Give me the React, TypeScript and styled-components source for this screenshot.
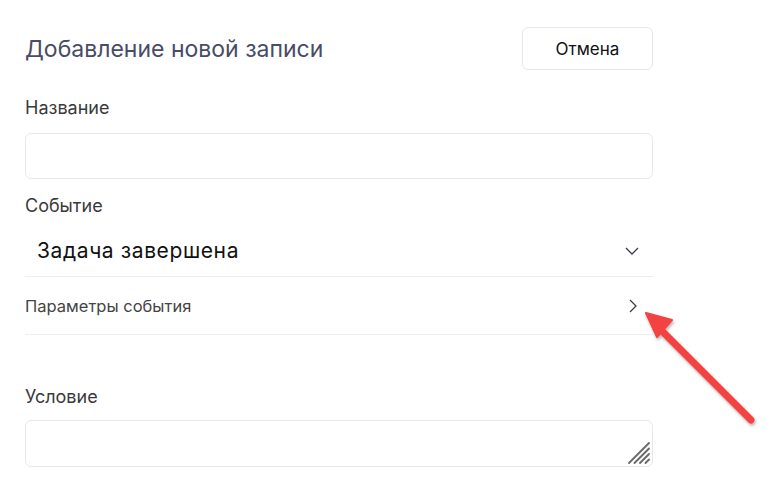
import styled, { createGlobalStyle } from "styled-components";

const GlobalStyle = createGlobalStyle`
  body {
    margin: 0;
    background: #ffffff;
    font-family: Inter, Roboto, "Liberation Sans", sans-serif;
  }
`;

const Page = styled.div`
  position: relative;
  width: 772px;
  height: 503px;
  overflow: hidden;
`;

const Form = styled.div`
  width: 628px;
  padding: 27px 0 0 25px;
  display: flex;
  flex-direction: column;
`;

const Header = styled.div`
  display: flex;
  align-items: center;
  justify-content: space-between;
  height: 43px;
`;

const Title = styled.h2`
  margin: 0;
  font-size: 23px;
  font-weight: 400;
  color: #484c66;
`;

const CancelButton = styled.button`
  width: 131px;
  height: 43px;
  border: 1px solid #e7e7e9;
  border-radius: 6px;
  background: #ffffff;
  font-family: inherit;
  font-size: 17px;
  color: #111111;
  cursor: pointer;
`;

const Label = styled.label<{ $top: number }>`
  display: block;
  margin-top: ${(p) => p.$top}px;
  font-size: 18px;
  line-height: 22px;
  color: #3a3a3a;
`;

const TextInput = styled.input`
  box-sizing: border-box;
  width: 100%;
  height: 46px;
  margin-top: 14px;
  border: 1px solid #e8e8ea;
  border-radius: 6px;
  outline: none;
  font-family: inherit;
  font-size: 16px;
`;

const Row = styled.div<{ $height: number; $pad: number; $top: number }>`
  box-sizing: border-box;
  display: flex;
  align-items: center;
  justify-content: space-between;
  height: ${(p) => p.$height}px;
  padding: ${(p) => p.$top}px 14px 0 ${(p) => p.$pad}px;
  border-bottom: 1px solid #eceef5;
`;

const SelectValue = styled.span`
  font-size: 21px;
  letter-spacing: 0.6px;
  color: #111111;
`;

const RowText = styled.span`
  font-size: 16.5px;
  color: #444444;
`;

const AreaWrap = styled.div`
  position: relative;
  margin-top: 12px;
`;

const TextArea = styled.textarea`
  box-sizing: border-box;
  display: block;
  width: 100%;
  height: 47px;
  border: 1px solid #e8e8ea;
  border-radius: 6px;
  outline: none;
  font-family: inherit;
  font-size: 16px;
  resize: none;
`;

const Grip = styled.svg`
  position: absolute;
  right: 2px;
  bottom: 2px;
  pointer-events: none;
`;

const Arrow = styled.svg`
  position: absolute;
  left: 640px;
  top: 305px;
  overflow: visible;
`;

export default function App() {
  return (
    <>
      <GlobalStyle />
      <Page>
        <Form>
          <Header>
            <Title>Добавление новой записи</Title>
            <CancelButton>Отмена</CancelButton>
          </Header>

          <Label $top={27}>Название</Label>
          <TextInput />

          <Label $top={16}>Событие</Label>
          <Row $height={60} $pad={12} $top={8}>
            <SelectValue>Задача завершена</SelectValue>
            <svg width="14" height="8" viewBox="0 0 14 8">
              <path d="M1 1l6 6 6-6" fill="none" stroke="#3a3f4a" strokeWidth="1.3" />
            </svg>
          </Row>
          <Row $height={58} $pad={0} $top={0}>
            <RowText>Параметры события</RowText>
            <svg width="8" height="14" viewBox="0 0 8 14" style={{ marginRight: 2 }}>
              <path d="M1 1l6 6-6 6" fill="none" stroke="#3a3f4a" strokeWidth="1.3" />
            </svg>
          </Row>

          <Label $top={51}>Условие</Label>
          <AreaWrap>
            <TextArea />
            <Grip width="24" height="24" viewBox="0 0 24 24">
              <g stroke="#6b6b6b" strokeWidth="1.9" strokeLinecap="round">
                <line x1="2" y1="22" x2="22" y2="2" />
                <line x1="7.5" y1="22" x2="22" y2="7.5" />
                <line x1="13" y1="22" x2="22" y2="13" />
                <line x1="18.5" y1="22" x2="22" y2="18.5" />
              </g>
            </Grip>
          </AreaWrap>
        </Form>

        <Arrow width="120" height="125" viewBox="0 0 120 125">
          <defs>
            <filter id="sh" x="-20%" y="-20%" width="140%" height="140%">
              <feDropShadow dx="1" dy="2" stdDeviation="1.5" floodColor="#000" floodOpacity="0.3" />
            </filter>
          </defs>
          <g filter="url(#sh)">
            <line x1="22" y1="26" x2="111" y2="115" stroke="#f24343" strokeWidth="7" strokeLinecap="round" />
            <polygon points="6,8 32,15 17,32" fill="#f24343" stroke="#f24343" strokeWidth="2" strokeLinejoin="round" />
          </g>
        </Arrow>
      </Page>
    </>
  );
}
